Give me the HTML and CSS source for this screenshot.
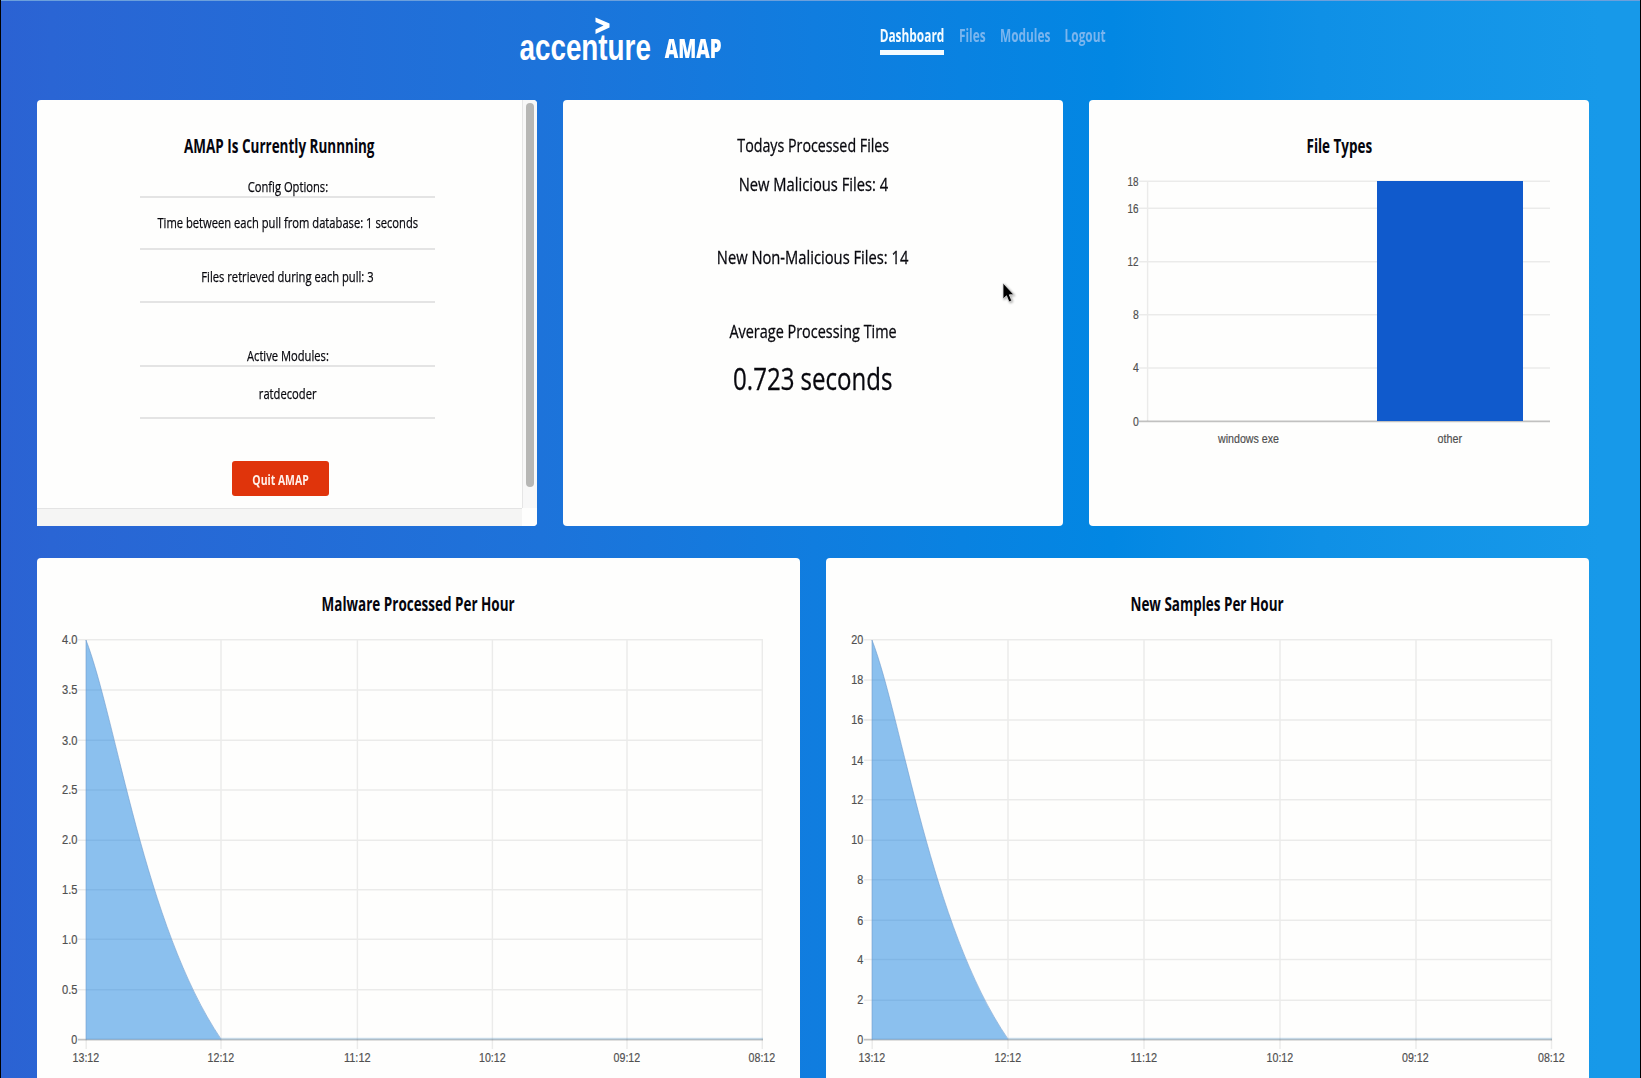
FILE: index.html
```html
<!DOCTYPE html>
<html lang="en">
<head>
<meta charset="utf-8">
<title>AMAP Dashboard</title>
<link rel="stylesheet" href="styles.css">
</head>
<body>
<header class="topbar">
  <div class="brand">
    <svg class="brand-mark" viewBox="0 0 131 46" width="131" height="46" aria-label="accenture">
      <path class="chevron" d="M75.500 0.500L89.500 6.500V10.500L75.500 17V12.500L83.500 8.500L75.500 5Z"/>
      <text class="wordmark" transform="translate(-.5 43) scale(.773 1)">accenture</text>
    </svg>
    <span class="brand-name"><span class="sq">AMAP</span></span>
  </div>
  <nav class="menu">
    <a class="item active w-dash"><span class="sq">Dashboard</span></a>
    <a class="item w-files"><span class="sq">Files</span></a>
    <a class="item w-modules"><span class="sq">Modules</span></a>
    <a class="item w-logout"><span class="sq">Logout</span></a>
  </nav>
</header>

<main>
  <div class="row row-top">
    <section class="card status">
      <div class="status-body">
        <h2><span class="sq">AMAP Is Currently Runnning</span></h2>
        <div class="config">
          <div class="cfg-head"><span class="sq">Config Options:</span></div>
          <div class="cfg-row first"><span class="sq">Time between each pull from database: 1 seconds</span></div>
          <div class="cfg-row"><span class="sq">Files retrieved during each pull: 3</span></div>
          <div class="cfg-head second"><span class="sq">Active Modules:</span></div>
          <div class="cfg-row last"><span class="sq">ratdecoder</span></div>
        </div>
        <button class="quit"><span class="sq">Quit AMAP</span></button>
      </div>
      <div class="track-v"><div class="thumb"></div></div>
      <div class="track-h"></div>
      <div class="corner"></div>
    </section>

    <section class="card totals">
      <p><span class="sq">Todays Processed Files</span></p>
      <p class="m1"><span class="sq">New Malicious Files: 4</span></p>
      <p class="m2"><span class="sq">New Non-Malicious Files: 14</span></p>
      <p class="m3"><span class="sq">Average Processing Time</span></p>
      <p class="big"><span class="sq">0.723 seconds</span></p>
      <svg class="cursor" viewBox="0 0 14 22" width="14" height="22"><path d="M1 1V17L4.500 13.800L7 20L9.800 18.800L7.300 12.800H12Z"/></svg>
    </section>

    <section class="card">
      <h2><span class="sq">File Types</span></h2>
      <svg class="chart" viewBox="1089 157 500 369" width="500" height="369">
        <path class="grid" d="M1139 181.300H1550M1139 208.300H1550M1139 261.700H1550M1139 314.700H1550M1139 368H1550M1147.600 181V421"/>
        <path class="zero" d="M1139 421.300H1550"/>
        <rect class="bar" x="1377" y="181" width="146" height="240"/>
        <g class="ylab">
          <text x="1127.500" y="185.800" textLength="11" lengthAdjust="spacingAndGlyphs">18</text>
          <text x="1127.500" y="212.800" textLength="11" lengthAdjust="spacingAndGlyphs">16</text>
          <text x="1127.500" y="266" textLength="11" lengthAdjust="spacingAndGlyphs">12</text>
          <text x="1133" y="318.500" textLength="5.800" lengthAdjust="spacingAndGlyphs">8</text>
          <text x="1133" y="372.300" textLength="5.800" lengthAdjust="spacingAndGlyphs">4</text>
          <text x="1133" y="426" textLength="5.800" lengthAdjust="spacingAndGlyphs">0</text>
          <text x="1218" y="443.300" textLength="61" lengthAdjust="spacingAndGlyphs">windows exe</text>
          <text x="1437.500" y="443.300" textLength="24.500" lengthAdjust="spacingAndGlyphs">other</text>
        </g>
      </svg>
    </section>
  </div>

  <div class="row row-bottom">
    <section class="card">
      <h2><span class="sq">Malware Processed Per Hour</span></h2>
      <svg class="chart" viewBox="37 615 763 470" width="763" height="470">
        <path class="grid" d="M78 639.700H763M78 690H763M78 740.300H763M78 790H763M78 840.300H763M78 889.700H763M78 939.300H763M78 989.700H763M221 639V1049M357.400 639V1049M492.400 639V1049M627 639V1049M762.300 639V1049M86.200 1039V1049"/>
        <path class="zero" d="M78 1039.600H763"/>
        <path class="area" d="M86 640C116 718 145 927 221 1039.500H86Z"/>
        <path class="line" d="M86 1039.500V640C116 718 145 927 221 1039"/>
        <path class="base" d="M221 1038.700H763"/>
        <g class="ylab">
          <text x="62" y="644" textLength="15.500" lengthAdjust="spacingAndGlyphs">4.0</text>
          <text x="62" y="694" textLength="15.500" lengthAdjust="spacingAndGlyphs">3.5</text>
          <text x="62" y="744.600" textLength="15.500" lengthAdjust="spacingAndGlyphs">3.0</text>
          <text x="62" y="794.300" textLength="15.500" lengthAdjust="spacingAndGlyphs">2.5</text>
          <text x="62" y="844.300" textLength="15.500" lengthAdjust="spacingAndGlyphs">2.0</text>
          <text x="62" y="894" textLength="15.500" lengthAdjust="spacingAndGlyphs">1.5</text>
          <text x="62" y="943.600" textLength="15.500" lengthAdjust="spacingAndGlyphs">1.0</text>
          <text x="62" y="993.800" textLength="15.500" lengthAdjust="spacingAndGlyphs">0.5</text>
          <text x="71.300" y="1044.300" textLength="6" lengthAdjust="spacingAndGlyphs">0</text>
          <text x="72.600" y="1062" textLength="26.600" lengthAdjust="spacingAndGlyphs">13:12</text>
          <text x="207.600" y="1062" textLength="26.600" lengthAdjust="spacingAndGlyphs">12:12</text>
          <text x="344" y="1062" textLength="26.600" lengthAdjust="spacingAndGlyphs">11:12</text>
          <text x="479" y="1062" textLength="26.600" lengthAdjust="spacingAndGlyphs">10:12</text>
          <text x="613.600" y="1062" textLength="26.600" lengthAdjust="spacingAndGlyphs">09:12</text>
          <text x="748.600" y="1062" textLength="26.600" lengthAdjust="spacingAndGlyphs">08:12</text>
        </g>
      </svg>
    </section>

    <section class="card">
      <h2><span class="sq">New Samples Per Hour</span></h2>
      <svg class="chart" viewBox="826 615 763 470" width="763" height="470">
        <path class="grid" d="M864 639.700H1552M864 680H1552M864 720H1552M864 760.300H1552M864 799.700H1552M864 840.300H1552M864 879.700H1552M864 920.200H1552M864 959.600H1552M864 1000.200H1552M1008 639V1049M1144 639V1049M1280 639V1049M1416 639V1049M1551.500 639V1049M872.200 1039V1049"/>
        <path class="zero" d="M864 1039.600H1552"/>
        <path class="area" d="M872 640C902 718 931 927 1008 1039.500H872Z"/>
        <path class="line" d="M872 1039.500V640C902 718 931 927 1008 1039"/>
        <path class="base" d="M1008 1038.700H1552"/>
        <g class="ylab">
          <text x="851.300" y="644" textLength="12" lengthAdjust="spacingAndGlyphs">20</text>
          <text x="851.300" y="684.300" textLength="12" lengthAdjust="spacingAndGlyphs">18</text>
          <text x="851.300" y="724.300" textLength="12" lengthAdjust="spacingAndGlyphs">16</text>
          <text x="851.300" y="764.600" textLength="12" lengthAdjust="spacingAndGlyphs">14</text>
          <text x="851.300" y="804" textLength="12" lengthAdjust="spacingAndGlyphs">12</text>
          <text x="851.300" y="844.300" textLength="12" lengthAdjust="spacingAndGlyphs">10</text>
          <text x="857.200" y="884.300" textLength="6" lengthAdjust="spacingAndGlyphs">8</text>
          <text x="857.200" y="924.600" textLength="6" lengthAdjust="spacingAndGlyphs">6</text>
          <text x="857.200" y="963.600" textLength="6" lengthAdjust="spacingAndGlyphs">4</text>
          <text x="857.200" y="1004" textLength="6" lengthAdjust="spacingAndGlyphs">2</text>
          <text x="857.200" y="1044.300" textLength="6" lengthAdjust="spacingAndGlyphs">0</text>
          <text x="858.600" y="1062" textLength="26.600" lengthAdjust="spacingAndGlyphs">13:12</text>
          <text x="994.600" y="1062" textLength="26.600" lengthAdjust="spacingAndGlyphs">12:12</text>
          <text x="1130.600" y="1062" textLength="26.600" lengthAdjust="spacingAndGlyphs">11:12</text>
          <text x="1266.600" y="1062" textLength="26.600" lengthAdjust="spacingAndGlyphs">10:12</text>
          <text x="1402" y="1062" textLength="26.600" lengthAdjust="spacingAndGlyphs">09:12</text>
          <text x="1538" y="1062" textLength="26.600" lengthAdjust="spacingAndGlyphs">08:12</text>
        </g>
      </svg>
    </section>
  </div>
</main>
</body>
</html>
```
FILE: styles.css
```css
* { box-sizing: border-box; margin: 0; padding: 0; }
html { background: #000; overflow: hidden; }
body {
  width: 1641px;
  height: 1078px;
  overflow: hidden;
  border: solid #000;
  border-width: 0 1px;
  font-family: "Open Sans", "Noto Sans", sans-serif;
  color: #08080e;
  background: linear-gradient(90deg, #2b62d3 0, #2a65d4 50px, #1d73da 540px, #107ddf 813px, #0287e3 1110px, #0f90e6 1320px, #1799e9 1600px);
}
.sq {
  display: inline-block;
  white-space: nowrap;
  transform: scaleX(.75);
}

/* header */
.topbar {
  height: 100px;
  border-top: 1px solid #6ca0dc;
  display: flex;
  align-items: flex-start;
}
.brand { display: flex; margin-left: 519px; width: 360px; padding-top: 16px; }
.brand-mark { display: block; overflow: visible; }
.chevron { fill: #fff; }
.wordmark {
  font-family: "Liberation Sans", Arial, sans-serif;
  font-size: 36px;
  font-weight: 700;
  fill: #fff;
}
.brand-name {
  display: flex;
  justify-content: center;
  width: 58px;
  margin-left: 13px;
  padding-top: 13px;
  font-size: 27px;
  line-height: 36px;
  font-weight: 800;
  color: #fff;
}
.brand-name .sq { transform: scaleX(.69); }
.menu { display: flex; gap: 14px; padding-top: 21px; }
.item {
  display: flex;
  justify-content: center;
  height: 33px;
  line-height: 26px;
  font-size: 18px;
  font-weight: 700;
  color: #7ab5ee;
}
.item .sq { transform: scaleX(.66); }
.item.active { color: #f4fbff; border-bottom: 5px solid #f4fbff; }
.w-dash { width: 64px; }
.w-files { width: 28px; }
.w-modules { width: 50px; }
.w-logout { width: 42px; }

/* cards */
main { padding: 0 0 0 36px; }
.row { display: grid; gap: 26px; }
.row-top { grid-template-columns: repeat(3, 500px); grid-auto-rows: 426px; }
.row-bottom { grid-template-columns: repeat(2, 763px); grid-auto-rows: 530px; margin-top: 32px; }
.card {
  position: relative;
  background: #fefefd;
  border-radius: 4px;
  padding-top: 33px;
  overflow: hidden;
  text-align: center;
}
h2 { font-size: 19px; line-height: 24px; font-weight: 700; color: #05050d; }
h2 .sq { transform: translateY(.7px) scaleX(.709); }
.chart { display: block; }

.status {
  display: grid;
  grid-template: 408px 18px / 485px 15px;
  padding: 0;
  border-bottom-left-radius: 0;
}
.status-body { padding-top: 33px; }
.config { width: 295px; margin: 19px 0 0 103px; font-size: 15px; line-height: 20px; -webkit-text-stroke: .25px #08080e; }
.cfg-head { display: flex; justify-content: center; border-bottom: 2px solid #e4e4e4; }
.cfg-row { display: flex; justify-content: center; padding: 16px 0 15px; border-bottom: 2px solid #e4e4e4; }
.first { padding: 14px 0 16px; }
.last { padding-bottom: 14px; }
.config .sq { transform: scaleX(.746); }
.second { margin-top: 42px; }
.quit {
  display: flex;
  align-items: center;
  justify-content: center;
  width: 97px;
  height: 35px;
  margin: 42px auto 0 195px;
  border: 0;
  border-radius: 3px;
  background: #e0340b;
  color: #fff0ea;
  font: 700 15px/20px "Open Sans", "Noto Sans", sans-serif;
}
.quit .sq { transform: scaleX(.695); }
.track-v { background: #f8f8f8; border-left: 1px solid #e6e6e6; padding: 3px 0 0 3px; }
.thumb { width: 8px; height: 384px; border-radius: 4px; background: #b7b7b5; }
.track-h { background: #f5f5f4; border-top: 1px solid #e4e4e4; }
.corner { background: #fefefd; }

.totals p { display: flex; justify-content: center; font-size: 19px; line-height: 24px; -webkit-text-stroke: .3px #08080e; }
.totals .m1 { margin-top: 15px; }
.totals .m2 { margin-top: 49px; }
.totals .m3 { margin-top: 50px; }
.totals .big { margin-top: 15px; font-size: 31px; line-height: 40px; }
.totals .m1 .sq, .totals .m2 .sq, .totals .big .sq { transform: scaleX(.775); }
.totals .m3 .sq { transform: scaleX(.76); }
.cursor { position: absolute; left: 439px; top: 182px; fill: #000; stroke: #e8e8e8; stroke-width: .8px; filter: drop-shadow(1px 1px 1px rgba(0, 0, 0, .35)); }

/* charts */
.grid { fill: none; stroke: rgba(0, 0, 0, .075); stroke-width: 1.500px; }
.zero { fill: none; stroke: rgba(0, 0, 0, .24); stroke-width: 1.800px; }
.bar { fill: #105acc; }
.area { fill: rgba(24, 130, 224, .5); }
.line { fill: none; stroke: rgba(110, 155, 205, .6); stroke-width: 1px; }
.base { fill: none; stroke: rgba(120, 175, 215, .35); stroke-width: 2px; }
.ylab {
  font-family: "Liberation Sans", Arial, sans-serif;
  font-size: 13.500px;
  fill: #505050;
  stroke: #505050;
  stroke-width: .2px;
}
```
